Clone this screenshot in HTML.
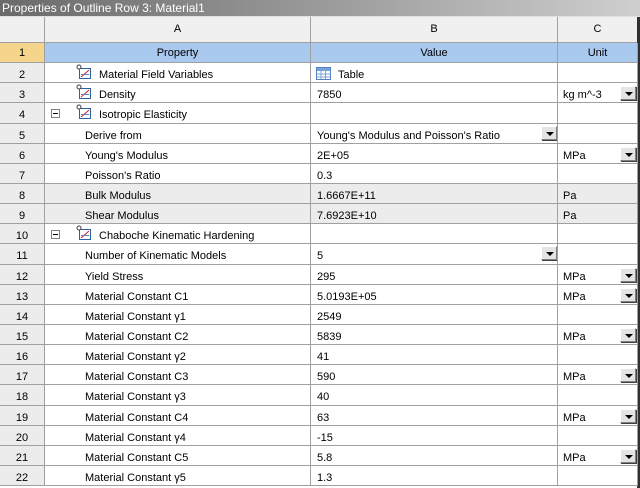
<!DOCTYPE html>
<html><head><meta charset="utf-8"><style>
*{margin:0;padding:0;box-sizing:border-box}
body{width:640px;height:488px;overflow:hidden;background:#fff;font-family:"Liberation Sans",Tahoma,sans-serif;font-size:11px;color:#000;position:relative}
.title{position:absolute;left:0;top:0;width:640px;height:17px;background:linear-gradient(to right,#6a6a6a,#9a9a9a 50%,#cfcfcf);color:#fff;font-size:12px;line-height:16px;padding-left:2px;border-bottom:1px solid #e0e0e0}
.hdr{position:absolute;top:17px;height:26px;background:#f0f0f0;border-right:1px solid #a0a0a0;border-bottom:1px solid #a0a0a0;text-align:center;line-height:25px;font-size:11px}
.c{position:absolute;border-right:1px solid #a0a0a0;border-bottom:1px solid #a0a0a0;line-height:25px;white-space:nowrap;overflow:hidden}
.c span{top:0}
.n{background:#ececec;text-align:center}
.g{background:#ececec}
.btn{position:absolute;width:16px;height:14px;background:#e4e4e4;border:1px solid;border-color:#fff #808080 #808080 #fff;box-shadow:1px 1px 0 #404040}
.btn:after{content:"";position:absolute;left:4px;top:5px;border-left:4px solid transparent;border-right:4px solid transparent;border-top:4px solid #000}
.ico{position:absolute;width:16px;height:16px}
.exp{position:absolute;width:9px;height:9px;border:1px solid #808080;background:#fff}
.exp:after{content:"";position:absolute;left:1px;top:3px;width:5px;height:1px;background:#000}
</style></head><body>
<div class="title">Properties of Outline Row 3: Material1</div>
<div class="hdr" style="left:0;width:45px"></div>
<div class="hdr" style="left:45px;width:266px">A</div>
<div class="hdr" style="left:311px;width:247px">B</div>
<div class="hdr" style="left:558px;width:80px">C</div>
<div style="position:absolute;left:637px;top:17px;width:3px;height:471px;background:#303030"></div>
<div id="rows"></div>
<script>
var R=[
[1,'','Property','Value','Unit'],
[2,'i','Material Field Variables','T:Table',''],
[3,'i','Density','7850','kg m^-3',0,1],
[4,'ei','Isotropic Elasticity','',''],
[5,'c','Derive from',"Young's Modulus and Poisson's Ratio",'',1],
[6,'c',"Young's Modulus",'2E+05','MPa',0,1],
[7,'c',"Poisson's Ratio",'0.3',''],
[8,'cg','Bulk Modulus','1.6667E+11','Pa'],
[9,'cg','Shear Modulus','7.6923E+10','Pa'],
[10,'ei','Chaboche Kinematic Hardening','',''],
[11,'c','Number of Kinematic Models','5','',1],
[12,'c','Yield Stress','295','MPa',0,1],
[13,'c','Material Constant C1','5.0193E+05','MPa',0,1],
[14,'c','Material Constant γ1','2549',''],
[15,'c','Material Constant C2','5839','MPa',0,1],
[16,'c','Material Constant γ2','41',''],
[17,'c','Material Constant C3','590','MPa',0,1],
[18,'c','Material Constant γ3','40',''],
[19,'c','Material Constant C4','63','MPa',0,1],
[20,'c','Material Constant γ4','-15',''],
[21,'c','Material Constant C5','5.8','MPa',0,1],
[22,'c','Material Constant γ5','1.3','']];
var h='',icon='<svg class="ico" viewBox="0 0 16 16" style="left:31px;top:1px"><rect x="3.5" y="4.5" width="11" height="10" fill="#fff" stroke="#3060a0"/><line x1="5" y1="13" x2="13" y2="6" stroke="#d02020"/><line x1="5" y1="10.5" x2="13" y2="10.5" stroke="#6080c0"/><circle cx="3" cy="3" r="2" fill="#fff" stroke="#404040"/></svg>';
R.forEach(function(r,i){
 var t=Math.round(43+i*20.14),hh=Math.round(43+(i+1)*20.14)-t,f=r[1];
 var g=f.indexOf('g')>=0?' g':'';
 var s='top:'+t+'px;height:'+hh+'px;';
 if(i==0){
  h+='<div class="c" style="'+s+'left:0;width:45px;background:#f5d48c;text-align:center;line-height:20px">1</div>';
  h+='<div class="c" style="'+s+'left:45px;width:266px;background:#a9c9ef;text-align:center;line-height:20px">Property</div>';
  h+='<div class="c" style="'+s+'left:311px;width:247px;background:#a9c9ef;text-align:center;line-height:20px">Value</div>';
  h+='<div class="c" style="'+s+'left:558px;width:80px;background:#a9c9ef;text-align:center;line-height:20px">Unit</div>';
  return;}
 h+='<div class="c n" style="'+s+'left:0;width:45px">'+r[0]+'</div>';
 var a='';
 if(f.indexOf('e')>=0)a+='<div class="exp" style="left:6px;top:6px"></div>';
 if(f.indexOf('i')>=0)a+=icon;
 var tx=f.indexOf('i')>=0?54:40;
 a+='<span style="position:absolute;left:'+tx+'px">'+r[2]+'</span>';
 h+='<div class="c'+g+'" style="'+s+'left:45px;width:266px">'+a+'</div>';
 var b=r[3],bb='';
 if(b.indexOf('T:')==0){bb='<svg style="position:absolute;left:5px;top:4px" width="15" height="13" viewBox="0 0 15 13"><rect x="0.5" y="0.5" width="14" height="12" fill="#fff" stroke="#5080c0"/><rect x="1" y="1" width="13" height="3" fill="#7aa0d8"/><path d="M1 7H14M1 10H14M5 4V12M9.5 4V12" stroke="#7aa0d8"/></svg><span style="position:absolute;left:27px">'+b.slice(2)+'</span>';}
 else bb='<span style="position:absolute;left:6px">'+b+'</span>';
 if(r[5])bb+='<div class="btn" style="left:230px;top:2px"></div>';
 h+='<div class="c'+g+'" style="'+s+'left:311px;width:247px">'+bb+'</div>';
 var cc='<span style="position:absolute;left:5px">'+r[4]+'</span>';
 if(r[6])cc+='<div class="btn" style="left:62px;top:3px"></div>';
 h+='<div class="c'+g+'" style="'+s+'left:558px;width:80px">'+cc+'</div>';
});
document.getElementById('rows').innerHTML=h;
</script>
</body></html>
